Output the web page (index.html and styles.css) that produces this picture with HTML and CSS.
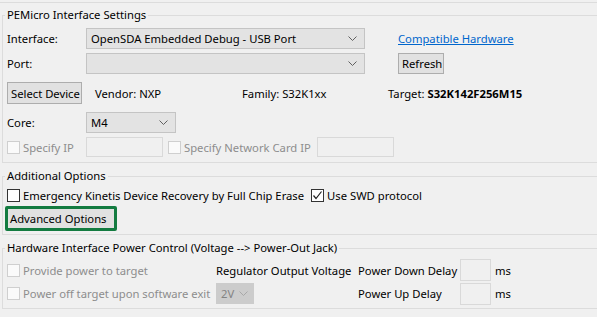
FILE: index.html
```html
<!DOCTYPE html>
<html>
<head>
<meta charset="utf-8">
<link rel="stylesheet" href="styles.css">
</head>
<body>
<div class="topline"></div>

<fieldset class="group g1">
  <legend>PEMicro Interface Settings</legend>
  <div class="row r1">
    <span class="lbl">Interface:</span>
    <div class="combo w-iface"><span class="combo-text">OpenSDA Embedded Debug - USB Port</span><svg class="chev" width="9" height="5" viewBox="0 0 9 5"><polyline points="0.5,0.5 4.5,4.5 8.5,0.5" fill="none" stroke="#606060" stroke-width="1"/></svg></div>
    <a class="link" href="#">Compatible Hardware</a>
  </div>
  <div class="row r2">
    <span class="lbl">Port:</span>
    <div class="combo w-iface"><span class="combo-text"></span><svg class="chev" width="9" height="5" viewBox="0 0 9 5"><polyline points="0.5,0.5 4.5,4.5 8.5,0.5" fill="none" stroke="#606060" stroke-width="1"/></svg></div>
    <button class="btn btn-refresh">Refresh</button>
  </div>
  <div class="row r3">
    <button class="btn btn-select">Select Device</button>
    <span class="info vendor">Vendor: NXP</span>
    <span class="info family">Family: S32K1xx</span>
    <span class="info">Target: <b>S32K142F256M15</b></span>
  </div>
  <div class="row r4">
    <span class="lbl">Core:</span>
    <div class="combo w-core"><span class="combo-text">M4</span><svg class="chev" width="9" height="5" viewBox="0 0 9 5"><polyline points="0.5,0.5 4.5,4.5 8.5,0.5" fill="none" stroke="#606060" stroke-width="1"/></svg></div>
  </div>
  <div class="row r5">
    <span class="chk-wrap lbl"><span class="chk dis"></span><span class="dis-text">Specify IP</span></span>
    <span class="input dis-input w-ip"></span>
    <span class="chk-wrap net"><span class="chk dis"></span><span class="dis-text">Specify Network Card IP</span></span>
    <span class="input dis-input w-ip"></span>
  </div>
</fieldset>

<fieldset class="group g2">
  <legend>Additional Options</legend>
  <div class="row r6">
    <span class="chk-wrap"><span class="chk"></span><span>Emergency Kinetis Device Recovery by Full Chip Erase</span></span>
    <span class="chk-wrap swd"><span class="chk"><svg width="11" height="11" viewBox="0 0 11 11"><polyline points="1.5,5.5 4,8.5 9.5,1.5" fill="none" stroke="#222" stroke-width="1.2"/></svg></span><span>Use SWD protocol</span></span>
  </div>
  <div class="highlight">
    <button class="btn btn-adv">Advanced Options</button>
  </div>
</fieldset>

<fieldset class="group g3">
  <legend>Hardware Interface Power Control (Voltage --&gt; Power-Out Jack)</legend>
  <div class="power">
    <span class="chk-wrap"><span class="chk dis"></span><span class="dis-text">Provide power to target</span></span>
    <span>Regulator Output Voltage</span>
    <span>Power Down Delay</span>
    <span class="input delay"></span>
    <span>ms</span>

    <span class="chk-wrap"><span class="chk dis"></span><span class="dis-text">Power off target upon software exit</span></span>
    <div class="combo combo-dis w-volt"><span class="combo-text">2V</span><svg class="chev" width="9" height="5" viewBox="0 0 9 5"><polyline points="0.5,0.5 4.5,4.5 8.5,0.5" fill="none" stroke="#a8a8a8" stroke-width="1"/></svg></div>
    <span>Power Up Delay</span>
    <span class="input delay"></span>
    <span>ms</span>
  </div>
</fieldset>
</body>
</html>
```

FILE: styles.css
```css
html, body {
  margin: 0;
  padding: 0;
}
body {
  background: #f0f0f0;
  font-family: "Noto Sans", "Open Sans", sans-serif;
  font-size: 11.25px;
  color: #000;
  width: 597px;
  height: 317px;
  overflow: hidden;
  white-space: nowrap;
}
.topline {
  margin-top: 2px;
  border-top: 1px solid #dcdcdc;
  width: 100%;
}
.group {
  margin: 4px 0 0 2px;
  padding: 0 0 0 4px;
  border: 1px solid #dcdcdc;
  border-right: none;
  width: 640px;
  box-sizing: border-box;
}
.group legend {
  padding: 0 2px;
  margin-left: -2px;
  line-height: 16px;
  height: 16px;
}
.g1 { padding-bottom: 5px; }
.g2 { margin-top: 5px; padding-bottom: 3px; }
.g3 { margin-top: 5px; padding-bottom: 4px; }

.row {
  display: flex;
  align-items: center;
}
.r1 { margin-top: 5px; height: 21px; }
.r2 { margin-top: 4px; height: 21px; }
.r3 { margin-top: 8px; height: 22px; }
.r4 { margin-top: 8px; height: 21px; }
.r5 { margin-top: 4px; height: 20px; }
.r6 { margin-top: 4px; height: 15px; }

.lbl {
  width: 79px;
  flex: none;
}
.combo {
  box-sizing: border-box;
  height: 21px;
  background: #e3e3e3;
  border: 1px solid #c4c4c4;
  display: flex;
  align-items: center;
  justify-content: space-between;
  padding: 0 7px 0 4px;
  flex: none;
}
.w-iface { width: 279px; }
.w-core { width: 90px; }
.w-volt { width: 38px; padding-right: 5px; }
.combo-dis {
  background: #cccccc;
  border-color: #cccccc;
  color: #838383;
}
.link {
  margin-left: 33px;
  color: #0066cc;
  text-decoration: underline;
}
.btn {
  font: inherit;
  box-sizing: border-box;
  background: #e1e1e1;
  border: 1px solid #adadad;
  color: #000;
  padding: 0 3px;
  margin: 0;
  white-space: nowrap;
}
.btn-refresh {
  margin-left: 33px;
  height: 21px;
  width: 46px;
}
.btn-select {
  width: 75px;
  height: 22px;
}
.vendor {
  margin-left: 13px;
  width: 147px;
}
.family {
  width: 146px;
}
.chk-wrap {
  display: flex;
  align-items: center;
  gap: 3px;
}
.chk {
  box-sizing: border-box;
  width: 13px;
  height: 13px;
  background: #fff;
  border: 1px solid #333;
  flex: none;
  display: flex;
  align-items: center;
  justify-content: center;
}
.chk.dis {
  background: #fafafa;
  border-color: #cfcfcf;
}
.dis-text { color: #8d8d8d; }
.input {
  box-sizing: border-box;
  height: 20px;
  border: 1px solid #d9d9d9;
  background: #f0f0f0;
  flex: none;
}
.w-ip { width: 77px; }
.net { margin-left: 5px; width: 149px; }
.swd { margin-left: 7px; }

.highlight {
  display: block;
  margin: 3px 0 0 -2px;
  border: 3px solid #137b40;
  border-radius: 2px;
  width: 112px;
  height: 25px;
  box-sizing: border-box;
}
.btn-adv {
  display: block;
  width: 100%;
  height: 100%;
  border: none;
  background: #e1e1e1;
  text-align: left;
  padding: 0 2px;
}

.power {
  display: grid;
  grid-template-columns: 209px 142px 102px 35px auto;
  grid-template-rows: 22px 21px;
  row-gap: 2px;
  align-items: center;
  margin-top: 3px;
}
.delay {
  width: 31px;
  height: 22px;
  background: #f0f0f0;
}
```
